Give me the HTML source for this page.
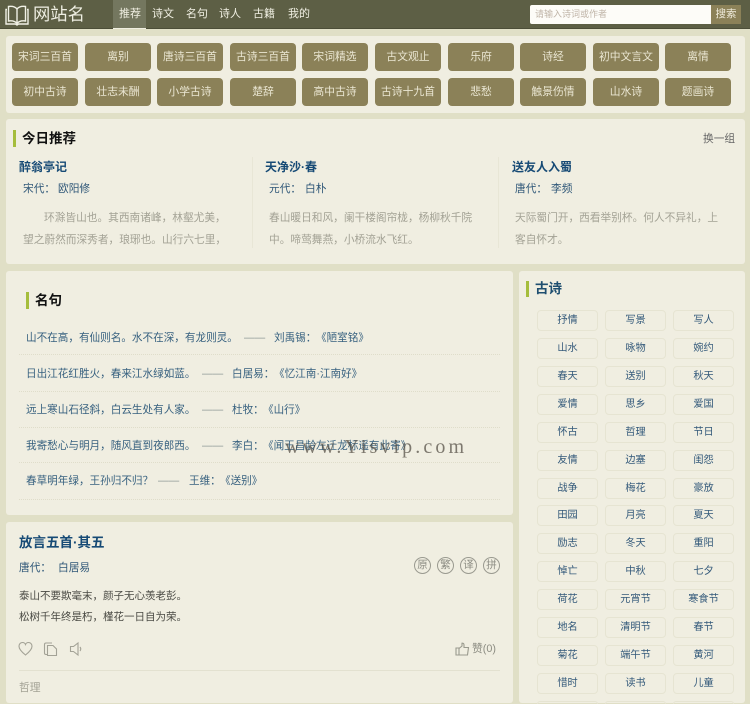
<!DOCTYPE html>
<html lang="zh"><head><meta charset="utf-8"><title>网站名</title>
<style>
html,body{margin:0;padding:0}
body{width:750px;height:703px;overflow:hidden;position:relative;background:#e0dfc6;font-family:"Liberation Sans","Noto Sans CJK SC",sans-serif;font-size:12px;color:#555}
div,span,a{position:absolute;white-space:nowrap;display:block}
.panel{background:#f0eee1;border-radius:3px}
.b{width:66px;height:28px;line-height:28px;background:#8b8158;color:#eae6d2;border-radius:4px;text-align:center;font-size:10.8px}
.bar{width:3px;background:#a5bd3c}
.h{font-size:13.5px;font-weight:bold;color:#111;line-height:18px}
.blue{color:#2f5778}
.t1{font-size:13px;font-weight:bold;color:#164a75;line-height:18px}
.gr{color:#a3a295;font-size:10.7px;line-height:22px}
.q{font-size:10.6px;line-height:16px;color:#36607f}
.d{font-size:10.6px;line-height:16px;color:#8f9a98}
.nav{top:6px;font-size:11px;line-height:17px;color:#f0efe2}
.dot{left:19px;width:481px;border-top:1px dotted #dfddca;height:0}
.tag{width:59px;height:19px;line-height:19px;border:1px solid #e6e4d2;border-radius:4px;text-align:center;font-size:10.2px;color:#33597a}
.c{width:15px;height:15px;line-height:15px;border:1px solid #9a9a90;border-radius:50%;text-align:center;font-size:10.500px;color:#8d8d84;top:557px}
.nub{top:701px;width:59px;height:2px;border:1px solid #e6e4d2;border-bottom:0;border-radius:4px 4px 0 0}
</style></head><body>
<div style="left:0;top:0;width:750px;height:28px;background:#5d5f45;border-bottom:1px solid #4c4e38"></div>
<svg style="position:absolute;left:5px;top:4px" width="24" height="22" viewBox="0 0 24 22" fill="none" stroke="#f1f1e6" stroke-width="1.4"><path d="M12 5C10 2.500 7 2 3.500 2.500L3.500 17C7 16.500 10 17 12 19.500C14 17 17 16.500 20.500 17L20.500 2.500C17 2 14 2.500 12 5Z"/><path d="M12 5V19.500"/><path d="M2 5.500H1V20H10.500L12 21L13.500 20H23V5.500H22"/></svg>
<div style="left:33px;top:2px;font-size:17.3px;line-height:25px;color:#eeeee2">网站名</div>
<div style="left:113px;top:0;width:33px;height:28px;background:#74775f;border-bottom:1px solid #efeee0"></div>
<div class="nav" style="left:119px">推荐</div>
<div class="nav" style="left:152px">诗文</div>
<div class="nav" style="left:186px">名句</div>
<div class="nav" style="left:219px">诗人</div>
<div class="nav" style="left:253px">古籍</div>
<div class="nav" style="left:288px">我的</div>
<div style="left:530px;top:5px;width:181px;height:19px;background:#fdfcf8;border-radius:2px 0 0 2px"></div>
<div style="left:535px;top:6px;font-size:9px;line-height:17px;color:#c0b5a8">请输入诗词或作者</div>
<div style="left:711px;top:5px;width:30px;height:19px;line-height:19px;background:#8b8158;color:#f0ecdc;text-align:center;font-size:10.500px">搜索</div>

<div class="panel" style="left:6px;top:36px;width:739px;height:77px"></div>
<div class="b" style="left:12px;top:43px">宋词三百首</div><div class="b" style="left:85px;top:43px">离别</div><div class="b" style="left:157px;top:43px">唐诗三百首</div><div class="b" style="left:230px;top:43px">古诗三百首</div><div class="b" style="left:302px;top:43px">宋词精选</div><div class="b" style="left:375px;top:43px">古文观止</div><div class="b" style="left:448px;top:43px">乐府</div><div class="b" style="left:520px;top:43px">诗经</div><div class="b" style="left:593px;top:43px">初中文言文</div><div class="b" style="left:665px;top:43px">离情</div>
<div class="b" style="left:12px;top:78px">初中古诗</div><div class="b" style="left:85px;top:78px">壮志未酬</div><div class="b" style="left:157px;top:78px">小学古诗</div><div class="b" style="left:230px;top:78px">楚辞</div><div class="b" style="left:302px;top:78px">高中古诗</div><div class="b" style="left:375px;top:78px">古诗十九首</div><div class="b" style="left:448px;top:78px">悲愁</div><div class="b" style="left:520px;top:78px">触景伤情</div><div class="b" style="left:593px;top:78px">山水诗</div><div class="b" style="left:665px;top:78px">题画诗</div>

<div class="panel" style="left:6px;top:119px;width:739px;height:145px"></div>
<div class="bar" style="left:13px;top:130px;height:17px"></div>
<div class="h" style="left:22px;top:130px">今日推荐</div>
<div style="left:703px;top:131px;font-size:10.700px;line-height:16px;color:#666">换一组</div>
<div style="left:252px;top:157px;width:1px;height:91px;background:#e8e6d6"></div>
<div style="left:498px;top:157px;width:1px;height:91px;background:#e8e6d6"></div>

<div class="t1" style="left:19px;top:158px;font-size:12px">醉翁亭记</div>
<div class="blue" style="left:23px;top:181px;font-size:10.700px;line-height:16px">宋代：</div><div class="blue" style="left:58px;top:181px;font-size:10.700px;line-height:16px">欧阳修</div>
<div class="gr" style="left:44px;top:207px">环滁皆山也。其西南诸峰，林壑尤美，</div>
<div class="gr" style="left:23px;top:229px">望之蔚然而深秀者，琅琊也。山行六七里，</div>

<div class="t1" style="left:265px;top:158px;font-size:12px">天净沙·春</div>
<div class="blue" style="left:269px;top:181px;font-size:10.700px;line-height:16px">元代：</div><div class="blue" style="left:305px;top:181px;font-size:10.700px;line-height:16px">白朴</div>
<div class="gr" style="left:269px;top:207px">春山暖日和风，阑干楼阁帘栊，杨柳秋千院</div>
<div class="gr" style="left:269px;top:229px">中。啼莺舞燕，小桥流水飞红。</div>

<div class="t1" style="left:512px;top:158px;font-size:12px">送友人入蜀</div>
<div class="blue" style="left:515px;top:181px;font-size:10.700px;line-height:16px">唐代：</div><div class="blue" style="left:551px;top:181px;font-size:10.700px;line-height:16px">李频</div>
<div class="gr" style="left:515px;top:207px">天际蜀门开，西看举别杯。何人不异礼，上</div>
<div class="gr" style="left:515px;top:229px">客自怀才。</div>

<div class="panel" style="left:6px;top:271px;width:507px;height:244px"></div>
<div class="bar" style="left:26px;top:292px;height:17px"></div>
<div class="h" style="left:35px;top:292px">名句</div>

<div class="q" style="left:26px;top:330px">山不在高，有仙则名。水不在深，有龙则灵。</div>
<div class="d" style="left:244px;top:330px">——</div>
<div class="q" style="left:274px;top:330px">刘禹锡：</div><div class="q" style="left:316px;top:330px">《陋室铭》</div>
<div class="dot" style="top:354px"></div>

<div class="q" style="left:26px;top:366px">日出江花红胜火，春来江水绿如蓝。</div>
<div class="d" style="left:202px;top:366px">——</div>
<div class="q" style="left:232px;top:366px">白居易：</div><div class="q" style="left:274px;top:366px">《忆江南·江南好》</div>
<div class="dot" style="top:391px"></div>

<div class="q" style="left:26px;top:402px">远上寒山石径斜，白云生处有人家。</div>
<div class="d" style="left:202px;top:402px">——</div>
<div class="q" style="left:232px;top:402px">杜牧：</div><div class="q" style="left:263px;top:402px">《山行》</div>
<div class="dot" style="top:427px"></div>

<div class="q" style="left:26px;top:438px">我寄愁心与明月，随风直到夜郎西。</div>
<div class="d" style="left:202px;top:438px">——</div>
<div class="q" style="left:232px;top:438px">李白：</div><div class="q" style="left:263px;top:438px">《闻王昌龄左迁龙标遥有此寄》</div>
<div class="dot" style="top:462px"></div>

<div class="q" style="left:26px;top:473px">春草明年绿，王孙归不归？</div>
<div class="d" style="left:158px;top:473px">——</div>
<div class="q" style="left:189px;top:473px">王维：</div><div class="q" style="left:220px;top:473px">《送别》</div>
<div class="dot" style="top:499px"></div>
<div style="left:285px;top:436px;font-family:'Liberation Serif',serif;font-size:20px;line-height:22px;letter-spacing:3.100px;color:rgba(80,75,65,.72)">www.Yisvip.com</div>

<div class="panel" style="left:6px;top:522px;width:507px;height:181px"></div>
<div class="t1" style="left:19px;top:534px;font-size:13.500px">放言五首·其五</div>
<div class="blue" style="left:19px;top:560px;font-size:10.700px;line-height:16px">唐代：</div><div class="blue" style="left:58px;top:560px;font-size:10.700px;line-height:16px">白居易</div>
<div style="left:19px;top:588px;font-size:10.500px;line-height:16px;color:#4a4a44">泰山不要欺毫末，颜子无心羡老彭。</div>
<div style="left:19px;top:609px;font-size:10.500px;line-height:16px;color:#4a4a44">松树千年终是朽，槿花一日自为荣。</div>
<div class="c" style="left:414px">原</div><div class="c" style="left:437px">繁</div><div class="c" style="left:460px">译</div><div class="c" style="left:483px">拼</div>
<svg style="position:absolute;left:18px;top:641px" width="68" height="16" viewBox="0 0 68 16" fill="none" stroke="#a3a296" stroke-width="1.100"><path d="M7.500 14C3 10.500 1 8 1 5.300C1 3 2.600 1.500 4.500 1.500C5.800 1.500 7 2.200 7.500 3.500C8 2.200 9.200 1.500 10.500 1.500C12.400 1.500 14 3 14 5.300C14 8 12 10.500 7.500 14Z"/><path d="M29 13.500H28Q26.500 13.500 26.500 12V3.500Q26.500 2 28 2H34"/><path d="M29.500 14.500V4.500H35L38.500 8V14.500Z"/><path d="M52.500 5.500H55.500L60 2V14L55.500 10.500H52.500Z"/><path d="M62 6Q63.500 8 62 10"/></svg>
<svg style="position:absolute;left:455px;top:642px" width="15" height="14" viewBox="0 0 15 14" fill="none" stroke="#9a9a8e" stroke-width="1.100"><path d="M1 6H4V13H1Z"/><path d="M4 6.500L7 4V1.200Q9 1 9 3V5.500H13.500L12.500 13H4"/></svg>
<div style="left:472px;top:641px;font-size:10.800px;line-height:16px;color:#8c8c82">赞(0)</div>
<div style="left:19px;top:670px;width:481px;height:1px;background:#e3e1d0"></div>
<div style="left:19px;top:680px;font-size:10.800px;line-height:16px;color:#a3a295">哲理</div>

<div class="panel" style="left:519px;top:271px;width:226px;height:432px"></div>
<div class="bar" style="left:526px;top:281px;height:16px"></div>
<div class="t1" style="left:535px;top:280px;font-size:13.500px;color:#1f4f70">古诗</div>
<div class="tag" style="left:537px;top:310px">抒情</div><div class="tag" style="left:605px;top:310px">写景</div><div class="tag" style="left:673px;top:310px">写人</div>
<div class="tag" style="left:537px;top:338px">山水</div><div class="tag" style="left:605px;top:338px">咏物</div><div class="tag" style="left:673px;top:338px">婉约</div>
<div class="tag" style="left:537px;top:366px">春天</div><div class="tag" style="left:605px;top:366px">送别</div><div class="tag" style="left:673px;top:366px">秋天</div>
<div class="tag" style="left:537px;top:394px">爱情</div><div class="tag" style="left:605px;top:394px">思乡</div><div class="tag" style="left:673px;top:394px">爱国</div>
<div class="tag" style="left:537px;top:422px">怀古</div><div class="tag" style="left:605px;top:422px">哲理</div><div class="tag" style="left:673px;top:422px">节日</div>
<div class="tag" style="left:537px;top:450px">友情</div><div class="tag" style="left:605px;top:450px">边塞</div><div class="tag" style="left:673px;top:450px">闺怨</div>
<div class="tag" style="left:537px;top:478px">战争</div><div class="tag" style="left:605px;top:478px">梅花</div><div class="tag" style="left:673px;top:478px">豪放</div>
<div class="tag" style="left:537px;top:505px">田园</div><div class="tag" style="left:605px;top:505px">月亮</div><div class="tag" style="left:673px;top:505px">夏天</div>
<div class="tag" style="left:537px;top:533px">励志</div><div class="tag" style="left:605px;top:533px">冬天</div><div class="tag" style="left:673px;top:533px">重阳</div>
<div class="tag" style="left:537px;top:561px">悼亡</div><div class="tag" style="left:605px;top:561px">中秋</div><div class="tag" style="left:673px;top:561px">七夕</div>
<div class="tag" style="left:537px;top:589px">荷花</div><div class="tag" style="left:605px;top:589px">元宵节</div><div class="tag" style="left:673px;top:589px">寒食节</div>
<div class="tag" style="left:537px;top:617px">地名</div><div class="tag" style="left:605px;top:617px">清明节</div><div class="tag" style="left:673px;top:617px">春节</div>
<div class="tag" style="left:537px;top:645px">菊花</div><div class="tag" style="left:605px;top:645px">端午节</div><div class="tag" style="left:673px;top:645px">黄河</div>
<div class="tag" style="left:537px;top:673px">惜时</div><div class="tag" style="left:605px;top:673px">读书</div><div class="tag" style="left:673px;top:673px">儿童</div>
<div class="nub" style="left:537px"></div><div class="nub" style="left:605px"></div><div class="nub" style="left:673px"></div>
</body></html>
